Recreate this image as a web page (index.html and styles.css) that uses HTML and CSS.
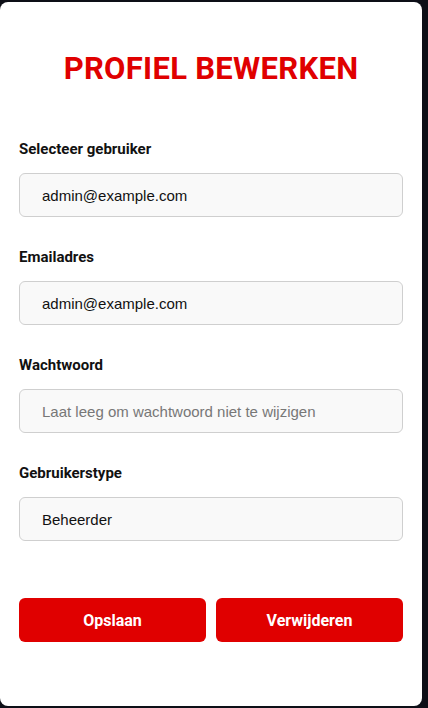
FILE: index.html
```html
<!DOCTYPE html>
<html lang="nl">
<head>
<meta charset="utf-8">
<title>Profiel bewerken</title>
<link rel="stylesheet" href="styles.css">
</head>
<body>
<div class="card">
  <h1 class="title">PROFIEL BEWERKEN</h1>
  <form class="form">
    <div class="field">
      <label class="label">Selecteer gebruiker</label>
      <div class="input">admin@example.com</div>
    </div>
    <div class="field">
      <label class="label">Emailadres</label>
      <div class="input">admin@example.com</div>
    </div>
    <div class="field">
      <label class="label">Wachtwoord</label>
      <div class="input placeholder">Laat leeg om wachtwoord niet te wijzigen</div>
    </div>
    <div class="field">
      <label class="label">Gebruikerstype</label>
      <div class="input">Beheerder</div>
    </div>
    <div class="actions">
      <button type="button" class="btn">Opslaan</button>
      <button type="button" class="btn">Verwijderen</button>
    </div>
  </form>
</div>
</body>
</html>
```
FILE: styles.css
```css
html, body {
  margin: 0;
  padding: 0;
}
body {
  background: #0d0f17;
  height: 708px;
  overflow: hidden;
}
.card {
  box-sizing: border-box;
  margin-top: 2px;
  width: 422px;
  height: 704px;
  background: #ffffff;
  border-radius: 8px;
  padding: 48px 19px 0 19px;
  font-family: Roboto, "Liberation Sans", sans-serif;
}
.title {
  margin: 0;
  font-size: 31px;
  line-height: 37px;
  font-weight: 700;
  color: #e00000;
  text-align: center;
  letter-spacing: 0.3px;
}
.form {
  margin-top: 53px;
  display: flex;
  flex-direction: column;
}
.field {
  display: flex;
  flex-direction: column;
  margin-bottom: 31px;
}
.label {
  font-size: 15px;
  line-height: 18px;
  font-weight: 700;
  color: #111111;
  margin-bottom: 15px;
}
.input {
  box-sizing: border-box;
  height: 44px;
  border: 1px solid #cfcfcf;
  border-radius: 6px;
  background: #f9f9f9;
  padding: 0 22px;
  display: flex;
  align-items: center;
  font-family: "Liberation Sans", Arial, sans-serif;
  font-size: 15px;
  color: #111111;
}
.placeholder {
  color: #777777;
}
.actions {
  margin-top: 26px;
  display: grid;
  grid-template-columns: 1fr 1fr;
  gap: 10px;
}
.btn {
  height: 44px;
  border: none;
  border-radius: 6px;
  background: #e00000;
  color: #ffffff;
  font-family: Roboto, "Liberation Sans", sans-serif;
  font-size: 16px;
  font-weight: 700;
  padding: 0;
}
```
